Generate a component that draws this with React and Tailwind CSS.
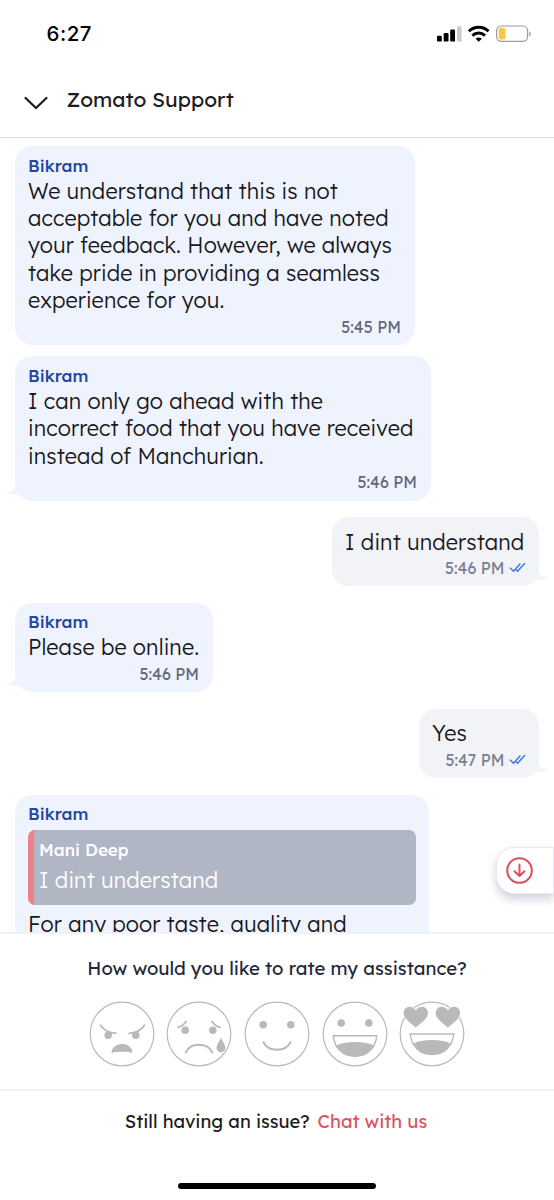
const GRAY = '#b9b9b9';

function StatusBar() {
  return (
    <div className="flex h-[67px] shrink-0 items-center justify-between pl-[46.5px] pr-[22px]">
      <span className="pt-px font-[Inter,sans-serif] text-[20.5px] leading-none font-medium tracking-[0.5px] text-black">6:27</span>
      <svg width="96" height="20" viewBox="0 0 96 20">
        <rect x="1" y="11.8" width="4.8" height="5.8" rx="1.2" fill="#000" />
        <rect x="7.7" y="9" width="4.8" height="8.6" rx="1.2" fill="#000" />
        <rect x="14.2" y="5.5" width="4.8" height="12.1" rx="1.2" fill="#000" />
        <rect x="21" y="2.2" width="4.6" height="15.4" rx="1.2" fill="#ccc" />
        <g fill="none" stroke="#000" strokeWidth="3">
          <path d="M32.9 7.3a14 14 0 0 1 19.6 0" />
          <path d="M36.4 11.6a9.2 9.2 0 0 1 12.6 0" />
        </g>
        <path d="M39.6 14.8a4.6 4.6 0 0 1 6.2 0l-3.1 3z" fill="#000" />
        <rect x="60.6" y="2" width="31" height="15.4" rx="4.6" fill="none" stroke="#9b9b9b" strokeWidth="1.2" />
        <rect x="62.6" y="4" width="7" height="11.4" rx="2" fill="#f5c944" />
        <path d="M93.3 7.4c2 .6 2 4.2 0 4.8z" fill="#9b9b9b" />
      </svg>
    </div>
  );
}

function Header() {
  return (
    <header className="flex h-[71px] shrink-0 items-center gap-[18.5px] border-b border-[#e1e2e8] pl-6">
      <svg width="24" height="16" viewBox="0 0 24 16" className="mt-[2px]">
        <path d="M1.5 3 12 13 22.5 3" fill="none" stroke="#1c1c1c" strokeWidth="2.2" strokeLinecap="round" />
      </svg>
      <h1 className="mb-[5.5px] text-[20.9px] leading-7 font-[390] text-[#1c1c1c]">Zomato Support</h1>
    </header>
  );
}

function Ticks() {
  return (
    <svg width="17" height="11" viewBox="0 0 17 11" fill="none" stroke="#3d74e0" strokeWidth="1.4" strokeLinecap="round">
      <path d="M1.2 6 4.6 9.3 11 2" />
      <path d="M7.4 8.2 8.6 9.3 15.6 1.5" />
    </svg>
  );
}

function Tail({ mine }) {
  return mine ? (
    <svg width="16" height="12" viewBox="0 0 16 12" className="absolute right-[-9px] bottom-[2px]">
      <path d="M7 0C8 3.5 11 4.8 16 6.2 13 7.6 9 7.5 4 7.3L0 12V0z" fill="#f2f3f7" />
    </svg>
  ) : (
    <svg width="16" height="12" viewBox="0 0 16 12" className="absolute bottom-[2px] left-[-8px]">
      <path d="M8 0C7.6 3 5 4.4 0 6.2 3 7.4 7 7.5 12 7.3L16 12V0z" fill="#eff3fe" />
    </svg>
  );
}

function Bubble({ name, lines, time, mine, tail, quote, className }) {
  return (
    <div
      className={`relative flex flex-col rounded-[17px] px-[13px] pb-[7.5px] ${
        mine ? 'self-end bg-[#f2f3f7] pt-[10.5px]' : 'self-start bg-[#eff3fe] pt-[8.5px]'
      } ${className}`}
    >
      {name && <span className="text-[17px] leading-[22px] font-medium text-[#2546a0]">{name}</span>}
      {quote && (
        <div className="mt-[5px] mb-[5.5px] h-[74.5px] overflow-hidden rounded-[7px] border-l-[6px] border-[#ee8087] bg-[#b0b6c4] pt-[9px] pl-[5px] text-white">
          <div className="text-[17px] leading-[22px] font-medium">{quote.name}</div>
          <div className="mt-[5px] text-[21.6px] leading-[28px] font-[320] tracking-[0.12px]">{quote.text}</div>
        </div>
      )}
      <div className="text-[21.6px] leading-[27.45px] font-[340] tracking-[0.12px] text-[#17181c]">
        {lines.map((line) => (
          <div key={line} className="whitespace-nowrap">{line}</div>
        ))}
      </div>
      {time && (
        <div className={`mt-[2px] flex items-center justify-end text-[15.9px] leading-[22px] font-[390] ${mine ? 'gap-[4.5px] text-[#7b7e92]' : 'pr-px text-[#62677c]'}`}>
          {time}
          {mine && <Ticks />}
        </div>
      )}
      {tail && <Tail mine={mine} />}
    </div>
  );
}

function Face({ children }) {
  return (
    <svg width="66" height="66" viewBox="-33 -33 66 66" fill="none" stroke={GRAY} strokeWidth="1.8" strokeLinecap="round" className="overflow-visible">
      <circle r="31.8" strokeWidth="1.2" />
      {children}
    </svg>
  );
}

function Eyes({ y }) {
  return (
    <g fill={GRAY} stroke="none">
      <circle cx="-13.8" cy={y} r="3.8" />
      <circle cx="13.8" cy={y} r="3.8" />
    </g>
  );
}

function Grin() {
  return (
    <g>
      <path d="M-21.8 0H21.8C20.5 12 12.5 20.4 0 20.4S-20.5 12-21.8 0z" fill="#fff" strokeWidth="1.4" />
      <path d="M-18.6 9.4C-8 5 8 5 18.6 9.4 15 16.4 8.5 20.4 0 20.4S-15 16.4-18.6 9.4z" fill={GRAY} stroke="none" />
    </g>
  );
}

function Heart({ x }) {
  return (
    <path
      transform={`translate(${x} -16.8)`}
      d="M0 10.6C-3.2 6.6-12.2 2.4-12.2-4.2-12.2-7.9-9.4-10.5-6.2-10.5-3.5-10.5-1.2-9 0-6.8 1.2-9 3.5-10.5 6.2-10.5 9.4-10.5 12.2-7.9 12.2-4.2 12.2 2.4 3.2 6.6 0 10.6z"
      fill={GRAY}
      stroke="#fff"
      strokeWidth="1.6"
      paintOrder="stroke"
    />
  );
}

function Ratings() {
  return (
    <div className="mt-[21px] flex justify-center gap-[11.6px]">
      <Face>
        <Eyes y={1.2} />
        <path d="M-21.5-8.8C-18-3.6-13-1-6.2-.8M22.5-8.8C19-3.6 14-1 7.2-.6" />
        <path d="M-9.8 18.3C-10.5 8 10.2 8 9.8 18.3 6 16.8-6 16.8-9.8 18.3z" fill={GRAY} strokeWidth="1" strokeLinejoin="round" />
      </Face>
      <Face>
        <Eyes y={-3.8} />
        <path d="M-21-6.6C-17.5-7.6-15-9.4-13-12.5M21-6.6C17.5-7.6 15-9.4 13-12.5" />
        <path d="M-13.2 18.5C-8.5 8.2 8.5 8.2 13.2 18.5" strokeWidth="2" />
        <path d="M22 3.6C23.5 8 26.4 10.6 26.4 14A4.4 4.4 0 0 1 17.6 14C17.6 10.6 20.5 8 22 3.6z" fill={GRAY} stroke="none" />
      </Face>
      <Face>
        <Eyes y={-9.2} />
        <path d="M-13.5 8.2C-8.5 18.2 8.5 18.2 13.5 8.2" strokeWidth="2" />
      </Face>
      <Face>
        <Eyes y={-11} />
        <g transform="translate(0 1.8)"><Grin /></g>
      </Face>
      <Face>
        <Heart x={-16.2} />
        <Heart x={15.9} />
        <Grin />
      </Face>
    </div>
  );
}

export default function App() {
  return (
    <div className="flex h-[1200px] w-[554px] flex-col overflow-hidden bg-white font-[Lexend,Inter,sans-serif]">
      <StatusBar />
      <Header />
      <main className="relative flex h-[794px] shrink-0 flex-col overflow-hidden px-[15px] pt-[8px]">
        <Bubble
          name="Bikram"
          lines={['We understand that this is not', 'acceptable for you and have noted', 'your feedback. However, we always', 'take pride in providing a seamless', 'experience for you.']}
          time="5:45 PM"
          className="w-[400px]"
        />
        <Bubble
          name="Bikram"
          lines={['I can only go ahead with the', 'incorrect food that you have received', 'instead of Manchurian.']}
          time="5:46 PM"
          tail
          className="mt-[11.2px] w-[416px]"
        />
        <Bubble mine tail lines={['I dint understand']} time="5:46 PM" className="mt-[16.2px] w-[207px]" />
        <Bubble name="Bikram" tail lines={['Please be online.']} time="5:46 PM" className="mt-[16.4px] w-[198px]" />
        <Bubble mine tail lines={['Yes']} time="5:47 PM" className="mt-[16.4px] w-[120px]" />
        <Bubble
          name="Bikram"
          quote={{ name: 'Mani Deep', text: 'I dint understand' }}
          lines={['For any poor taste, quality and']}
          className="mt-[16.4px] w-[414px]"
        />
        <button
          aria-label="Scroll to latest"
          className="absolute top-[709px] right-0 flex h-[47px] w-[58.5px] items-center rounded-l-[18px] border border-[#e6e8ef] bg-white pl-[9px] shadow-[0_5px_10px_rgba(40,50,90,0.22)]"
        >
          <svg width="27" height="27" viewBox="0 0 27 27" fill="none" stroke="#d8505e" strokeWidth="2" strokeLinecap="round" strokeLinejoin="round">
            <circle cx="13.5" cy="13.5" r="12.3" />
            <path d="M13.5 7.5V19M8.5 14.2 13.5 19 18.5 14.2" />
          </svg>
        </button>
      </main>
      <section className="h-[159px] shrink-0 border-y-[2.5px] border-[#f1f2f6] pt-[21.5px]">
        <p className="text-center text-[18.5px] leading-6 font-[380] text-[#25283a]">How would you like to rate my assistance?</p>
        <Ratings />
      </section>
      <footer className="flex grow flex-col items-center justify-between pt-[19px] pb-[11px]">
        <p className="mr-[2px] flex gap-[8px] text-[18.3px] leading-6 font-[370] text-[#1c1c1c]">
          Still having an issue? <a className="text-[#db5361]">Chat with us</a>
        </p>
        <div className="h-[6px] w-[198px] rounded-full bg-black" />
      </footer>
    </div>
  );
}
